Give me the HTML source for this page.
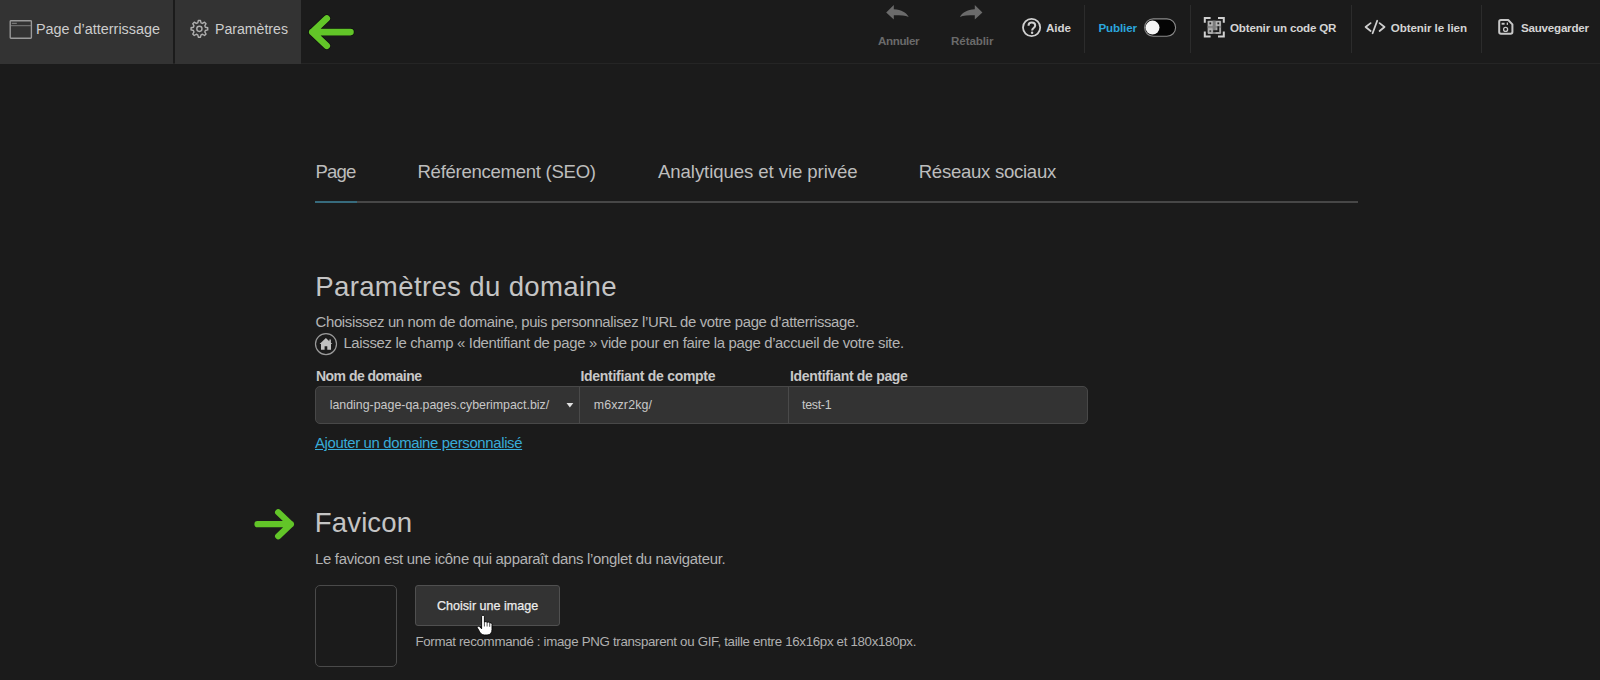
<!DOCTYPE html>
<html lang="fr">
<head>
<meta charset="utf-8">
<title>Paramètres</title>
<style>
html,body{margin:0;padding:0;}
body{width:1600px;height:680px;overflow:hidden;background:#1b1b1b;position:relative;font-family:"Liberation Sans",sans-serif;}
.tx{position:absolute;white-space:nowrap;font-family:"Liberation Sans",sans-serif;}
.box{position:absolute;box-sizing:border-box;}
svg.ov{position:absolute;left:0;top:0;width:1600px;height:680px;}
</style>
</head>
<body>
<!-- top bar -->
<div class="box" style="left:0;top:63px;width:1600px;height:1px;background:#252525"></div>
<div class="box" style="left:0;top:0;width:173px;height:64px;background:#333333"></div>
<div class="box" style="left:175px;top:0;width:126px;height:64px;background:#333333"></div>
<div class="box" style="left:1084px;top:5px;width:1px;height:48px;background:#2c2c2c"></div>
<div class="box" style="left:1190px;top:5px;width:1px;height:48px;background:#2c2c2c"></div>
<div class="box" style="left:1351px;top:5px;width:1px;height:48px;background:#2c2c2c"></div>
<div class="box" style="left:1481px;top:5px;width:1px;height:48px;background:#2c2c2c"></div>

<!-- content tabs line -->
<div class="box" style="left:315px;top:201px;width:1043px;height:2px;background:#474747"></div>
<div class="box" style="left:315px;top:201px;width:42px;height:2px;background:#376b7d"></div>

<!-- input group -->
<div class="box" style="left:315px;top:386px;width:773px;height:37.5px;background:#333333;border:1px solid #484848;border-radius:5px"></div>
<div class="box" style="left:579px;top:387px;width:1px;height:35.5px;background:#4a4a4a"></div>
<div class="box" style="left:788px;top:387px;width:1px;height:35.5px;background:#4a4a4a"></div>

<!-- favicon box -->
<div class="box" style="left:315px;top:585px;width:82px;height:82px;border:1px solid #4a4a4a;border-radius:5px"></div>
<!-- button -->
<div class="box" style="left:415px;top:585px;width:145px;height:41px;background:#333333;border:1px solid #505050;border-radius:3px"></div>

<div class="tx" style="left:36.3px;top:21.43px;font-size:15.2px;line-height:15.2px;font-weight:400;color:#cdcdcd;transform:scaleX(0.9476);transform-origin:0 0;">Page d’atterrissage</div>
<div class="tx" style="left:215.0px;top:21.43px;font-size:15.2px;line-height:15.2px;font-weight:400;color:#cdcdcd;transform:scaleX(0.9299);transform-origin:0 0;">Paramètres</div>
<div class="tx" style="left:878.0px;top:35.18px;font-size:11.6px;line-height:11.6px;font-weight:700;color:#6a6a6a;letter-spacing:-0.385px;">Annuler</div>
<div class="tx" style="left:951.0px;top:35.18px;font-size:11.6px;line-height:11.6px;font-weight:700;color:#6a6a6a;letter-spacing:-0.096px;">Rétablir</div>
<div class="tx" style="left:1046.0px;top:21.98px;font-size:11.6px;line-height:11.6px;font-weight:700;color:#d4d4d4;letter-spacing:-0.042px;">Aide</div>
<div class="tx" style="left:1098.5px;top:21.98px;font-size:11.6px;line-height:11.6px;font-weight:700;color:#2ba7de;letter-spacing:-0.135px;">Publier</div>
<div class="tx" style="left:1230.0px;top:21.98px;font-size:11.6px;line-height:11.6px;font-weight:700;color:#d4d4d4;letter-spacing:-0.177px;">Obtenir un code QR</div>
<div class="tx" style="left:1390.7px;top:21.98px;font-size:11.6px;line-height:11.6px;font-weight:700;color:#d4d4d4;letter-spacing:-0.072px;">Obtenir le lien</div>
<div class="tx" style="left:1521.0px;top:21.98px;font-size:11.6px;line-height:11.6px;font-weight:700;color:#d4d4d4;letter-spacing:-0.225px;">Sauvegarder</div>
<div class="tx" style="left:315.5px;top:162.56px;font-size:18.6px;line-height:18.6px;font-weight:400;color:#bdbdbd;letter-spacing:-0.879px;">Page</div>
<div class="tx" style="left:417.5px;top:162.56px;font-size:18.6px;line-height:18.6px;font-weight:400;color:#bdbdbd;letter-spacing:-0.303px;">Référencement (SEO)</div>
<div class="tx" style="left:658.0px;top:162.56px;font-size:18.6px;line-height:18.6px;font-weight:400;color:#bdbdbd;letter-spacing:-0.081px;">Analytiques et vie privée</div>
<div class="tx" style="left:918.7px;top:162.56px;font-size:18.6px;line-height:18.6px;font-weight:400;color:#bdbdbd;letter-spacing:-0.286px;">Réseaux sociaux</div>
<div class="tx" style="left:315.2px;top:272.94px;font-size:27.6px;line-height:27.6px;font-weight:400;color:#c4c4c4;letter-spacing:0.345px;">Paramètres du domaine</div>
<div class="tx" style="left:315.6px;top:314.89px;font-size:14.9px;line-height:14.9px;font-weight:400;color:#b3b3b3;letter-spacing:-0.347px;">Choisissez un nom de domaine, puis personnalisez l’URL de votre page d’atterrissage.</div>
<div class="tx" style="left:343.4px;top:336.19px;font-size:14.9px;line-height:14.9px;font-weight:400;color:#b3b3b3;letter-spacing:-0.325px;">Laissez le champ « Identifiant de page » vide pour en faire la page d’accueil de votre site.</div>
<div class="tx" style="left:316.0px;top:369.45px;font-size:14px;line-height:14px;font-weight:700;color:#c8c8c8;letter-spacing:-0.523px;">Nom de domaine</div>
<div class="tx" style="left:580.5px;top:369.45px;font-size:14px;line-height:14px;font-weight:700;color:#c8c8c8;letter-spacing:-0.290px;">Identifiant de compte</div>
<div class="tx" style="left:789.9px;top:369.45px;font-size:14px;line-height:14px;font-weight:700;color:#c8c8c8;letter-spacing:-0.316px;">Identifiant de page</div>
<div class="tx" style="left:329.7px;top:398.70px;font-size:12.4px;line-height:12.4px;font-weight:400;color:#c8c8c8;letter-spacing:-0.006px;">landing-page-qa.pages.cyberimpact.biz/</div>
<div class="tx" style="left:593.7px;top:398.70px;font-size:12.4px;line-height:12.4px;font-weight:400;color:#c8c8c8;letter-spacing:0.143px;">m6xzr2kg/</div>
<div class="tx" style="left:802.0px;top:398.70px;font-size:12.4px;line-height:12.4px;font-weight:400;color:#c8c8c8;letter-spacing:-0.280px;">test-1</div>
<div class="tx" style="left:315.0px;top:436.39px;font-size:14.9px;line-height:14.9px;font-weight:400;color:#38acd8;letter-spacing:-0.341px;text-decoration:underline;text-underline-offset:1px;">Ajouter un domaine personnalisé</div>
<div class="tx" style="left:314.8px;top:508.94px;font-size:27.6px;line-height:27.6px;font-weight:400;color:#c4c4c4;letter-spacing:0.112px;">Favicon</div>
<div class="tx" style="left:315.0px;top:551.69px;font-size:14.9px;line-height:14.9px;font-weight:400;color:#b3b3b3;letter-spacing:-0.280px;">Le favicon est une icône qui apparaît dans l’onglet du navigateur.</div>
<div class="tx" style="left:436.8px;top:598.89px;font-size:13.6px;line-height:13.6px;font-weight:400;color:#ededed;transform:scaleX(0.9237);transform-origin:0 0;-webkit-text-stroke:0.25px #ededed;">Choisir une image</div>
<div class="tx" style="left:415.4px;top:634.74px;font-size:13.3px;line-height:13.3px;font-weight:400;color:#b0b0b0;letter-spacing:-0.313px;">Format recommandé : image PNG transparent ou GIF, taille entre 16x16px et 180x180px.</div>

<svg class="ov" viewBox="0 0 1600 680">
 <!-- window icon -->
 <rect x="10.2" y="20.7" width="21.2" height="17.5" rx="0.8" fill="none" stroke="#9a9a9a" stroke-width="1.35"/>
 <line x1="11" y1="25.7" x2="31" y2="25.7" stroke="#7c7c7c" stroke-width="1"/>
 <line x1="11.8" y1="23.3" x2="16.8" y2="23.3" stroke="#a0a0a0" stroke-width="0.8"/>
 <!-- gear -->
 <path d="M198.35,20.52 L200.45,20.52 L201.04,22.87 L202.47,23.46 L204.55,22.21 L206.04,23.70 L204.79,25.78 L205.38,27.21 L207.73,27.80 L207.73,29.90 L205.38,30.49 L204.79,31.92 L206.04,34.00 L204.55,35.49 L202.47,34.24 L201.04,34.83 L200.45,37.18 L198.35,37.18 L197.76,34.83 L196.33,34.24 L194.25,35.49 L192.76,34.00 L194.01,31.92 L193.42,30.49 L191.07,29.90 L191.07,27.80 L193.42,27.21 L194.01,25.78 L192.76,23.70 L194.25,22.21 L196.33,23.46 L197.76,22.87Z" fill="none" stroke="#b0b0b0" stroke-width="1.4" stroke-linejoin="round"/>
 <circle cx="199.4" cy="28.85" r="2.6" fill="none" stroke="#b0b0b0" stroke-width="1.4"/>
 <!-- green arrow top -->
 <g stroke="#000" stroke-width="8" stroke-linecap="round" stroke-linejoin="round" fill="none" opacity="0.45">
  <path d="M350.5,32.1 L312,32.1 M326.8,18.4 L312.3,32.1 L326.8,45.8"/>
 </g>
 <g stroke="#62c528" stroke-width="6.6" stroke-linecap="round" stroke-linejoin="round" fill="none">
  <path d="M350.5,32.1 L312.3,32.1 M326.8,18.4 L312.3,32.1 L326.8,45.8"/>
 </g>
 <!-- undo / redo -->
 <path d="M886.2,12.4 L893.8,5 V9.3 C901.5,9.6 906.6,12.8 908.7,17 C905.5,15.6 900.5,15.3 893.8,15.3 V19.6 Z" fill="#6b6b6b"/>
 <g transform="translate(1868.6,0) scale(-1,1)">
 <path d="M886.2,12.4 L893.8,5 V9.3 C901.5,9.6 906.6,12.8 908.7,17 C905.5,15.6 900.5,15.3 893.8,15.3 V19.6 Z" fill="#6b6b6b"/>
 </g>
 <!-- help -->
 <circle cx="1031.6" cy="27.5" r="8.6" fill="none" stroke="#d0d0d0" stroke-width="1.8"/>
 <path d="M1028.5,25.7 C1028.5,23.6 1030,22.5 1031.8,22.5 C1033.8,22.5 1035.2,23.8 1035.2,25.5 C1035.2,27.9 1032.1,28 1032.1,30.4" fill="none" stroke="#d0d0d0" stroke-width="2"/>
 <circle cx="1032.1" cy="32.7" r="1.2" fill="#d0d0d0"/>
 <!-- toggle -->
 <rect x="1144.6" y="18.9" width="31" height="17.4" rx="8.7" fill="#050505" stroke="#8a8a8a" stroke-width="1.1"/>
 <circle cx="1152.5" cy="27.6" r="7" fill="#f4f4f4"/>
 <!-- QR icon -->
 <g fill="none" stroke="#d0d0d0" stroke-width="2">
  <path d="M1204.8,22.8 V17.9 H1210.6 M1218,17.9 H1223.8 V22.8 M1223.8,31.6 V36.5 H1218 M1210.6,36.5 H1204.8 V31.6"/>
 </g>
 <rect x="1207.6" y="20.7" width="13.5" height="13.2" rx="0.8" fill="#a6a6a6"/>
 <rect x="1212.6" y="20.7" width="3" height="13.2" fill="#7a7a7a"/>
 <rect x="1207.6" y="26.2" width="13.5" height="1.5" fill="#7f7f7f"/>
 <rect x="1208.2" y="21.3" width="4.3" height="4.3" rx="0.6" fill="#b8b8b8"/>
 <rect x="1216.2" y="21.3" width="4.3" height="4.3" rx="0.6" fill="#b8b8b8"/>
 <rect x="1208.2" y="29" width="4.3" height="4.3" rx="0.6" fill="#b0b0b0"/>
 <rect x="1209.4" y="22.4" width="1.8" height="1.9" fill="#222"/>
 <rect x="1217.4" y="22.4" width="1.8" height="1.9" fill="#222"/>
 <rect x="1209.4" y="30.2" width="1.8" height="1.9" fill="#444"/>
 <path d="M1217.4,26.2 H1219.2 V32 H1213.2 V30.2 H1217.4 Z" fill="#1e1e1e"/>
 <!-- code icon -->
 <g fill="none" stroke="#cfcfcf" stroke-width="1.8" stroke-linecap="round" stroke-linejoin="round">
  <path d="M1370.6,23.1 L1365.6,27 L1370.6,31 M1377.2,20.8 L1372.6,33.2 M1379.6,23.1 L1384.5,27 L1379.6,31"/>
 </g>
 <!-- save icon -->
 <path d="M1501,20 H1508.2 L1512.4,24.4 V32 Q1512.4,33.8 1510.6,33.8 H1501 Q1499.2,33.8 1499.2,32 V21.8 Q1499.2,20 1501,20 Z" fill="none" stroke="#c8c8c8" stroke-width="2" stroke-linejoin="round"/>
 <rect x="1501.6" y="22.8" width="3" height="1.9" fill="#c8c8c8"/>
 <rect x="1506.7" y="22.6" width="1.3" height="2.3" fill="#c8c8c8"/>
 <circle cx="1505.6" cy="29.4" r="2" fill="none" stroke="#c8c8c8" stroke-width="1.3"/>
 <!-- house in circle -->
 <circle cx="326" cy="344.1" r="10.5" fill="none" stroke="#9a9a9a" stroke-width="1.2"/>
 <path d="M319.6,344 L325.9,337.9 L329.3,341.2 V339.6 H330.9 V342.7 L332.3,344 H331 V349.8 H327.3 V346.2 H324.6 V349.8 H321 V344 Z" fill="#c0c0c0"/>
 <!-- dropdown arrow -->
 <path d="M566.5,403 H573.3 L569.9,407.4 Z" fill="#e0e0e0"/>
 <!-- green arrow favicon -->
 <g stroke="#62c528" stroke-width="6.3" stroke-linecap="round" stroke-linejoin="round" fill="none">
  <path d="M257.5,524.2 L290.8,524.2 M278.2,512.3 L290.8,524.2 L278.2,536.2"/>
 </g>
 <!-- hand cursor -->
 <path d="M481.6,616.2 C481.6,614.8 484.4,614.8 484.4,616.2 V622.3 C484.9,621.4 486.8,621.4 487.1,622.6 C487.6,621.8 489.4,621.8 489.7,623.2 C490.3,622.6 492,622.8 492,624.3 V629.5 C492,632.5 490.5,635 487,635 H484.5 C482,635 480.5,633.5 479.5,631.5 L477.3,627.8 C476.8,626.8 478.6,625.5 479.6,626.7 L481.6,628.8 Z" fill="#ffffff" stroke="#000" stroke-width="0.9"/>
 <path d="M484.4,622.5 V626.5 M487.1,622.8 V626.5 M489.7,623.4 V626.8" stroke="#000" stroke-width="0.7" fill="none"/>
</svg>
</body>
</html>
